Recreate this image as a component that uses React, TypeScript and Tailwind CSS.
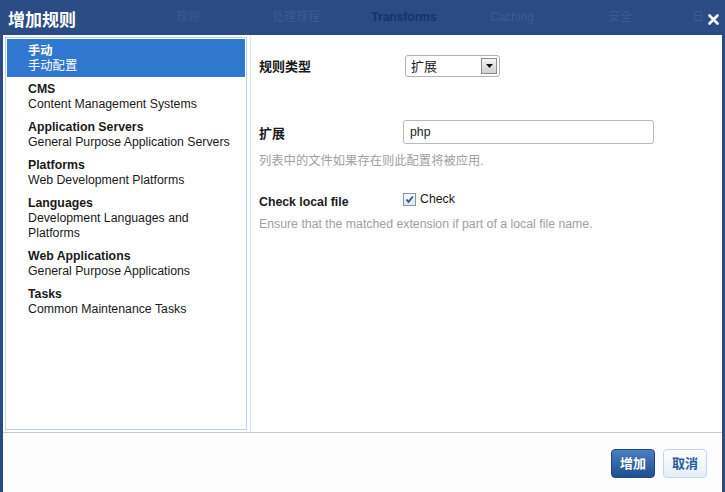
import { useState } from "react";

type RuleGroup = {
  title: string;
  subtitle: string;
};

const groups: RuleGroup[] = [
  { title: "手动", subtitle: "手动配置" },
  { title: "CMS", subtitle: "Content Management Systems" },
  { title: "Application Servers", subtitle: "General Purpose Application Servers" },
  { title: "Platforms", subtitle: "Web Development Platforms" },
  { title: "Languages", subtitle: "Development Languages and Platforms" },
  { title: "Web Applications", subtitle: "General Purpose Applications" },
  { title: "Tasks", subtitle: "Common Maintenance Tasks" },
];

// faded tabs of the page behind the dialog
const tabs = ["规则", "处理规程", "Transforms", "Caching", "安全"];

export default function App() {
  const [selected, setSelected] = useState(0);
  const [checked, setChecked] = useState(true);
  const [ext, setExt] = useState("php");

  return (
    <div
      className="flex h-[492px] w-[725px] flex-col overflow-hidden bg-[#2a4b84] text-[12.3px] leading-[15px] text-[#1a1a1a]"
      style={{ fontFamily: '"Liberation Sans", Arial, "Noto Sans CJK SC", sans-serif' }}
    >
      {/* Title bar */}
      <div className="relative flex h-[35px] shrink-0 items-center overflow-hidden">
        <div className="w-[134px] shrink-0 pl-[8px] pt-[5px] text-[17px] font-bold text-white">
          增加规则
        </div>
        {tabs.map((t) => (
          <div
            key={t}
            className={
              t === "Transforms"
                ? "w-[108px] shrink-0 text-center text-[12px] font-bold text-[#17346a]"
                : "w-[108px] shrink-0 text-center text-[12px] text-[#3a5d95]"
            }
          >
            {t}
          </div>
        ))}
        <div className="w-[30px] shrink-0 pl-[18px] text-[12px] text-[#3a5d95]">日</div>
        <button className="absolute right-[6px] top-[14px] flex h-[11px] w-[11px] items-center justify-center">
          <svg width="11" height="11" viewBox="0 0 11 11">
            <path d="M1.5 1.5 L9.5 9.5 M9.5 1.5 L1.5 9.5" stroke="white" strokeWidth="2.6" strokeLinecap="round" />
          </svg>
        </button>
      </div>

      {/* Dialog body */}
      <div className="mx-[3px] flex flex-1 flex-col bg-white">
        <div className="flex h-[397px] shrink-0">
          {/* Left list */}
          <div className="ml-[2px] mt-[2px] h-[393px] w-[242px] shrink-0 border border-[#bcd3ec] bg-white p-px">
            {groups.map((g, i) => (
              <div
                key={g.title}
                onClick={() => setSelected(i)}
                className={
                  i === selected
                    ? "cursor-pointer bg-[#2f77cf] pb-[3px] pl-[21px] pr-2 pt-[5px] text-white"
                    : "cursor-pointer pb-[3px] pl-[21px] pr-2 pt-[5px] text-[#1a1a1a]"
                }
              >
                <div className="font-bold">{g.title}</div>
                <div>{g.subtitle}</div>
              </div>
            ))}
          </div>

          {/* Right form */}
          <div className="ml-[3px] flex-1 border-l border-[#dde7f2] pl-[8px]">
            <div className="mt-[20px] flex items-center">
              <div className="w-[144px] pt-[1px] text-[13px] font-bold">规则类型</div>
              <div className="ml-[2px] flex h-[22px] w-[95px] items-center justify-between rounded-[3px] border border-[#b3b3b3] bg-white pl-[5px] pr-[2px]">
                <span className="text-[13px]">扩展</span>
                <span className="flex h-[16px] w-[16px] items-center justify-center border border-[#8c8c8c] bg-gradient-to-b from-[#f4f4f4] to-[#d0d0d0]">
                  <svg width="7" height="4" viewBox="0 0 7 4">
                    <path d="M0 0 H7 L3.5 4 Z" fill="#111" />
                  </svg>
                </span>
              </div>
            </div>

            <div className="mt-[43px] flex items-center">
              <div className="w-[144px] pt-[2px] text-[13px] font-bold">扩展</div>
              <input
                value={ext}
                onChange={(e) => setExt(e.target.value)}
                className="h-[24px] w-[251px] rounded-[3px] border border-[#b9b9b9] px-[6px] text-[12.3px] text-[#1a1a1a] outline-none"
              />
            </div>
            <div className="mt-[10px] text-[#a0a0a0]">列表中的文件如果存在则此配置将被应用.</div>

            <div className="mt-[23px] flex items-start">
              <div className="w-[144px] pt-[3px] font-bold">Check local file</div>
              <label className="flex cursor-pointer items-center gap-[4px]">
                <span
                  onClick={() => setChecked(!checked)}
                  className="flex h-[13px] w-[13px] items-center justify-center border border-[#7f95ad] bg-gradient-to-b from-[#f7f9fb] to-[#dfe6ee]"
                >
                  {checked && (
                    <svg width="9" height="9" viewBox="0 0 9 9">
                      <path d="M1.5 4.5 L3.5 7 L7.8 1.5" stroke="#2b4a8c" strokeWidth="1.7" fill="none" />
                    </svg>
                  )}
                </span>
                <span>Check</span>
              </label>
            </div>
            <div className="mt-[7px] text-[#a0a0a0]">Ensure that the matched extension if part of a local file name.</div>
          </div>
        </div>

        {/* Footer */}
        <div className="flex flex-1 items-start justify-end gap-[8px] border-t border-[#c9c9c9] bg-[#fdfdfd] pr-[15px] pt-[16px]">
          <button className="h-[29px] w-[44px] rounded-[4px] border border-[#1d4683] bg-gradient-to-b from-[#4a7fc2] to-[#1f4e90] text-[13px] font-bold text-white">
            增加
          </button>
          <button className="h-[29px] w-[44px] rounded-[4px] border border-[#c3d5ea] bg-gradient-to-b from-[#ffffff] to-[#e4edf7] text-[13px] font-bold text-[#2b5b9c]">
            取消
          </button>
        </div>
      </div>
    </div>
  );
}
